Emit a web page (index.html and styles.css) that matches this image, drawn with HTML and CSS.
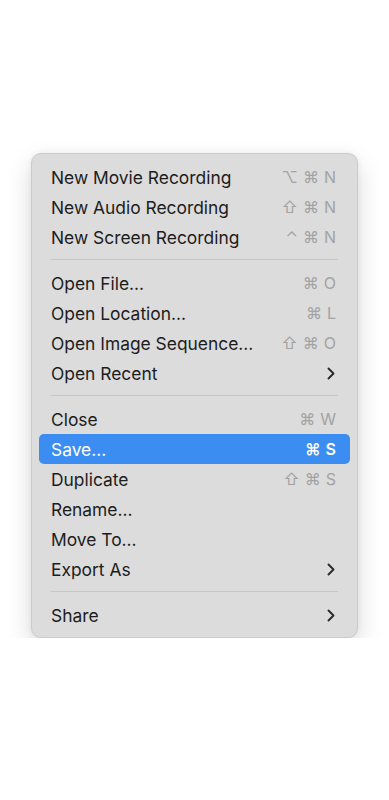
FILE: index.html
```html
<!DOCTYPE html>
<html lang="en">
<head>
  <meta charset="UTF-8" />
  <meta name="viewport" content="width=device-width, initial-scale=1" />
  <title>File menu</title>
  <link rel="stylesheet" href="styles.css">
</head>
<body>

<div class="menu">
  <div class="item"><span class="label">New Movie Recording</span><span class="keys"><span>⌥</span><span>⌘</span><span>N</span></span></div>
  <div class="item"><span class="label">New Audio Recording</span><span class="keys"><span>⇧</span><span>⌘</span><span>N</span></span></div>
  <div class="item"><span class="label">New Screen Recording</span><span class="keys"><span>⌃</span><span>⌘</span><span>N</span></span></div>
  <div class="sep"></div>
  <div class="item"><span class="label">Open File...</span><span class="keys"><span>⌘</span><span>O</span></span></div>
  <div class="item"><span class="label">Open Location...</span><span class="keys"><span>⌘</span><span>L</span></span></div>
  <div class="item"><span class="label">Open Image Sequence...</span><span class="keys"><span>⇧</span><span>⌘</span><span>O</span></span></div>
  <div class="item"><span class="label">Open Recent</span><svg class="chev" width="8" height="13" viewBox="0 0 8 13"><path d="M1.5 1.5 L6.5 6.5 L1.5 11.5" fill="none" stroke="currentColor" stroke-width="1.9" stroke-linecap="round" stroke-linejoin="round"/></svg></div>
  <div class="sep"></div>
  <div class="item"><span class="label">Close</span><span class="keys"><span>⌘</span><span>W</span></span></div>
  <div class="item active"><span class="label">Save...</span><span class="keys"><span>⌘</span><span>S</span></span></div>
  <div class="item"><span class="label">Duplicate</span><span class="keys"><span>⇧</span><span>⌘</span><span>S</span></span></div>
  <div class="item"><span class="label">Rename...</span></div>
  <div class="item"><span class="label">Move To...</span></div>
  <div class="item"><span class="label">Export As</span><svg class="chev" width="8" height="13" viewBox="0 0 8 13"><path d="M1.5 1.5 L6.5 6.5 L1.5 11.5" fill="none" stroke="currentColor" stroke-width="1.9" stroke-linecap="round" stroke-linejoin="round"/></svg></div>
  <div class="sep"></div>
  <div class="item"><span class="label">Share</span><svg class="chev" width="8" height="13" viewBox="0 0 8 13"><path d="M1.5 1.5 L6.5 6.5 L1.5 11.5" fill="none" stroke="currentColor" stroke-width="1.9" stroke-linecap="round" stroke-linejoin="round"/></svg></div>
</div>

</body>
</html>
```

FILE: styles.css
```css
body {
  margin: 0;
  background: #ffffff;
  font-family: Inter, "Noto Sans", "Liberation Sans", sans-serif;
  color: #1d1d1d;
}
.menu {
  width: 327px;
  margin: 153px 0 0 31px;
  padding: 8px 0 7px 0;
  box-sizing: border-box;
  background: #dcdcdc;
  border: 1px solid #cbcbcb;
  border-radius: 10px;
  box-shadow: 0 10px 26px rgba(0,0,0,0.15), 0 0 6px rgba(0,0,0,0.06);
}
.item {
  display: flex;
  align-items: center;
  justify-content: space-between;
  height: 30px;
  margin: 0 7px;
  padding: 0 14px 0 12px;
  border-radius: 5px;
  font-size: 17.4px;
  letter-spacing: 0;
}
.item.active {
  background: #3b8df1;
  color: #ffffff;
}
.keys {
  display: flex;
  gap: 5px;
  color: #a3a3a3;
  font-size: 16px;
}
.item.active .keys {
  color: #ffffff;
  font-weight: 600;
}
.chev {
  color: #2a2a2a;
  margin-right: 1px;
}
.sep {
  height: 1px;
  margin: 7px 19px 8px 19px;
  background: #c6c6c6;
}
```
